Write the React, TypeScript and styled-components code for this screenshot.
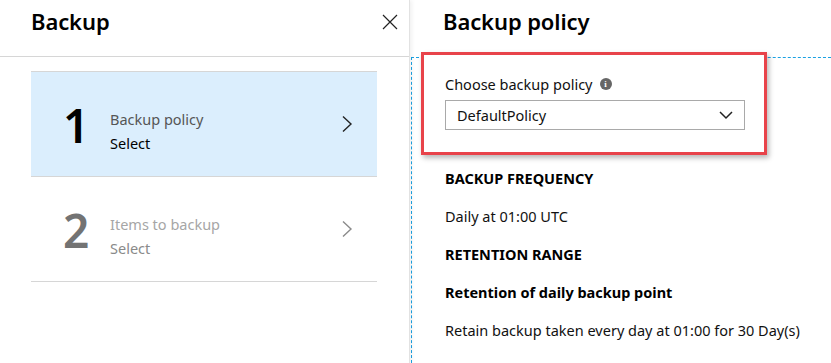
import styled, { createGlobalStyle } from 'styled-components'

const GlobalStyle = createGlobalStyle`
  body {
    margin: 0;
    background: #fff;
    font-family: 'Noto Sans', 'Open Sans', sans-serif;
    color: #000;
  }
`

const steps = [
  { num: '1', title: 'Backup policy', sub: 'Select', active: true },
  { num: '2', title: 'Items to backup', sub: 'Select', active: false },
]

const Chevron = ({ color }: { color: string }) => (
  <svg width='12' height='18' viewBox='0 0 12 18'>
    <path d='M2 1.5 L10 9 L2 16.5' fill='none' stroke={color} strokeWidth='1.4' />
  </svg>
)

const App = () => {
  return (
    <Wrapper>
      <GlobalStyle />
      <LeftPanel>
        <Header>
          <Title>Backup</Title>
          <CloseButton aria-label='close'>
            <svg width='16' height='16' viewBox='0 0 16 16'>
              <path d='M1 1 L15 15 M15 1 L1 15' stroke='#222' strokeWidth='1.2' />
            </svg>
          </CloseButton>
        </Header>
        <StepList>
          {steps.map((s) => (
            <Step key={s.num} $active={s.active}>
              <StepNum $active={s.active}>{s.num}</StepNum>
              <StepText>
                <StepTitle $active={s.active}>{s.title}</StepTitle>
                <StepSub $active={s.active}>{s.sub}</StepSub>
              </StepText>
              <Chevron color={s.active ? '#222' : '#8a8a8a'} />
            </Step>
          ))}
        </StepList>
      </LeftPanel>
      <RightPanel>
        <Header>
          <Title $right>Backup policy</Title>
        </Header>
        <Content>
          <Highlight>
            <Label>
              Choose backup policy
              <InfoIcon>i</InfoIcon>
            </Label>
            <Dropdown>
              <span>DefaultPolicy</span>
              <svg width='14' height='9' viewBox='0 0 14 9'>
                <path d='M1 1 L7 7 L13 1' fill='none' stroke='#222' strokeWidth='1.5' />
              </svg>
            </Dropdown>
          </Highlight>
          <Section>
            <Heading>BACKUP FREQUENCY</Heading>
            <Body>Daily at 01:00 UTC</Body>
            <Heading>RETENTION RANGE</Heading>
            <Heading>Retention of daily backup point</Heading>
            <Body>Retain backup taken every day at 01:00 for 30 Day(s)</Body>
          </Section>
        </Content>
      </RightPanel>
    </Wrapper>
  )
}

const Wrapper = styled.div`
  display: flex;
  height: 363px;
  width: 831px;
  overflow: hidden;
`

const LeftPanel = styled.section`
  width: 409px;
  flex-shrink: 0;
  border-right: 1px solid #e2e2e2;
  box-shadow: 2px 0 4px rgba(0, 0, 0, 0.06);
  position: relative;
  z-index: 1;
`

const Header = styled.header`
  height: 57px;
  box-sizing: border-box;
  display: flex;
  align-items: flex-start;
  justify-content: space-between;
  border-bottom: 1px solid #d6d6d6;
`

const Title = styled.h1<{ $right?: boolean }>`
  margin: 0;
  padding: 6px 0 0 ${(p) => (p.$right ? '33px' : '31px')};
  font-size: 22px;
  font-weight: 600;
  line-height: 30px;
  letter-spacing: -0.1px;
`

const CloseButton = styled.button`
  background: transparent;
  border: none;
  padding: 0;
  margin: 14px 11px 0 0;
  width: 16px;
  height: 16px;
  cursor: pointer;
  display: flex;
`

const StepList = styled.div`
  margin: 14px 32px 0 31px;
  border-top: 1px solid #d6d6d6;
`

const Step = styled.div<{ $active: boolean }>`
  height: 105px;
  box-sizing: border-box;
  display: flex;
  align-items: center;
  padding: 0 24px 0 32px;
  background: ${(p) => (p.$active ? '#dbeefd' : '#fff')};
  border-bottom: 1px solid #d6d6d6;
  svg {
    margin-left: auto;
  }
`

const StepNum = styled.div<{ $active: boolean }>`
  font-family: 'Noto Sans', sans-serif;
  font-weight: 600;
  font-size: 46px;
  line-height: 1;
  width: 47px;
  color: ${(p) => (p.$active ? '#000' : '#737373')};
  margin-top: 2px;
`

const StepText = styled.div`
  display: flex;
  flex-direction: column;
  gap: 2px;
  margin-top: 14px;
`

const StepTitle = styled.span<{ $active: boolean }>`
  font-size: 14.5px;
  line-height: 22px;
  color: ${(p) => (p.$active ? '#555' : '#a6a6a6')};
`

const StepSub = styled.span<{ $active: boolean }>`
  font-size: 14.5px;
  line-height: 22px;
  color: ${(p) => (p.$active ? '#000' : '#8a8a8a')};
`

const RightPanel = styled.section`
  flex: 1;
  display: flex;
  flex-direction: column;
  ${Header} {
    border-bottom: none;
  }
`

const Content = styled.div`
  flex: 1;
  border-top: 1px dashed #1ba1e2;
  border-left: 1px dashed #1ba1e2;
  margin-left: 1px;
`

const Highlight = styled.div`
  margin: -6px 0 0 9px;
  width: 346px;
  height: 103px;
  box-sizing: border-box;
  border: 3px solid #e8434a;
  background: #fff;
  box-shadow: 2px 3px 5px rgba(0, 0, 0, 0.28);
  padding: 19px 0 0 21px;
`

const Label = styled.div`
  display: flex;
  align-items: center;
  gap: 7px;
  font-size: 14.5px;
  line-height: 20px;
  color: #111;
`

const InfoIcon = styled.span`
  display: inline-flex;
  align-items: center;
  justify-content: center;
  width: 12px;
  height: 12px;
  border-radius: 50%;
  background: #666;
  color: #fff;
  font-size: 9px;
  font-weight: 700;
  font-family: 'Liberation Serif', serif;
`

const Dropdown = styled.div`
  margin-top: 6px;
  width: 300px;
  height: 30px;
  box-sizing: border-box;
  border: 1px solid #a9a9a9;
  display: flex;
  align-items: center;
  justify-content: space-between;
  padding: 0 11px 0 11px;
  font-size: 14.5px;
  color: #111;
`

const Section = styled.div`
  padding: 4px 0 0 33px;
  display: flex;
  flex-direction: column;
`

const Heading = styled.h5`
  margin: 0;
  font-size: 14.5px;
  font-weight: 700;
  line-height: 38px;
`

const Body = styled.p`
  margin: 0;
  font-size: 14.5px;
  line-height: 38px;
  color: #111;
`

export default App
